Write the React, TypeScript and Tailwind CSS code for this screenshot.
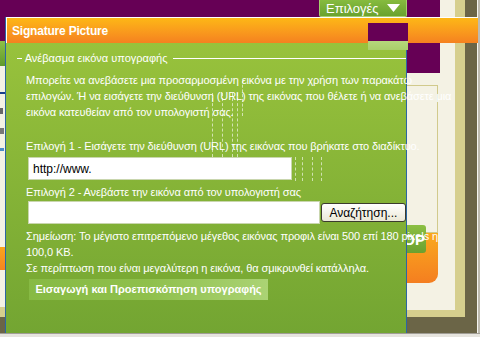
const font = "font-['Liberation_Sans','DejaVu_Sans',Arial,sans-serif]";

function LeftStrip() {
  return (
    <div className="flex w-[6px] flex-col">
      <div className="h-[41px] bg-[#660055]" />
      <div className="h-[25px] bg-gradient-to-b from-[#8fc046] to-[#5f9a2c]" />
      <div className="flex flex-1 flex-col gap-[14px] bg-[#f4f2e4] pt-[26px]">
        <div className="h-[2px] w-[5px] bg-[#1b3f8a]" />
        <div className="h-[6px] w-[3px] bg-[#666]" />
        <div className="h-[6px] w-[4px] bg-[#777]" />
        <div className="h-[3px] w-[4px] bg-[#4a8bc8]" />
      </div>
      <div className="h-[23px] bg-gradient-to-b from-[#f9a51c] to-[#f48420]" />
      <div className="h-[37px] bg-[#f4f2e4]" />
      <div className="h-[10px] bg-[#d6cf8e]" />
      <div className="h-[16px] bg-[#6b6547]" />
    </div>
  );
}

function RightStrip() {
  return (
    <div className="flex w-[73px] flex-col">
      <div className="flex flex-1">
        <div className="flex w-[58px] flex-col">
          <div className="flex flex-1">
            <div className="flex w-[48px] flex-col bg-[#f4f2e4]">
              <div className="h-[73px] w-[33px] bg-[#660055]" />
              <div className="mt-[12px] h-[148px] w-[31px] border border-l-0 border-[#d1ca8c]" />
              <div className="relative h-[50px] w-[31px] rounded-br-[9px] bg-gradient-to-b from-[#f9a91c] to-[#f47e20]">
                <div className="absolute left-0 top-[-8px] flex h-[28px] w-[19px] items-center justify-end overflow-hidden rounded-r-[3px] bg-gradient-to-b from-[#8cc043] to-[#6aa02f]">
                  <span className="whitespace-nowrap pr-[1px] text-[15px] font-bold leading-none text-white">OP</span>
                </div>
              </div>
            </div>
            <div className="w-[10px] bg-[#d6cf8e]" />
          </div>
          <div className="h-[7px] bg-[#d6cf8e]" />
        </div>
        <div className="w-[12px] bg-[#6b6547]" />
        <div className="w-[1px] bg-[#f5f5f0]" />
        <div className="w-[2px] bg-[#bdbab0]" />
      </div>
      <div className="flex h-[16px]">
        <div className="w-[70px] bg-[#6b6547]" />
        <div className="w-[1px] bg-[#f5f5f0]" />
        <div className="w-[2px] bg-[#bdbab0]" />
      </div>
    </div>
  );
}

function Line({ children }: { children: React.ReactNode }) {
  return (
    <div className="h-[16px] whitespace-nowrap text-[11px] leading-[16px] tracking-[-0.1px] text-white">
      {children}
    </div>
  );
}

function Glitch({ x, y, h }: { x: number; y: number; h: number }) {
  return (
    <div
      className="absolute w-0 border-l border-dashed border-white/60"
      style={{ left: x, top: y, height: h }}
    />
  );
}

function Dialog() {
  return (
    <div className="absolute left-[5px] top-[17px] h-[316px] w-[402px] border-l border-r border-[#2b66a3]">
      {/* header */}
      <div className="relative h-[26px] w-[472px] border-t border-l border-white bg-gradient-to-b from-[#fdb716] to-[#f58120] pl-[5px]">
        <span className="text-[12px] font-bold leading-[24px] tracking-[-0.2px] text-white">Signature Picture</span>
        <div className="absolute left-[361px] top-[5px] h-[18px] w-[40px] bg-[#660055]" />
        <div className="absolute left-[361px] top-[23px] h-[9px] w-[40px] bg-gradient-to-b from-[#b6d77c] to-[#a9cf6a]" />
      </div>
      {/* body */}
      <div className="h-[290px] bg-gradient-to-b from-[#98c23c] to-[#73a532] pt-[7px]">
        <div className="flex h-[16px] items-center">
          <div className="ml-[11px] h-px w-[6px] bg-white" />
          <span className="ml-[3px] whitespace-nowrap text-[11px] text-white">Ανέβασμα εικόνα υπογραφής</span>
          <div className="ml-[6px] h-px w-[296px] bg-white" />
        </div>
        <div className="mt-[6px] pl-[20px]">
          <Line>Μπορείτε να ανεβάσετε μια προσαρμοσμένη εικόνα με την χρήση των παρακάτω</Line>
          <Line>επιλογών. Ή να εισάγετε την διεύθυνση (URL) της εικόνας που θέλετε ή να ανεβάσετε μια</Line>
          <Line>εικόνα κατευθείαν από τον υπολογιστή σας.</Line>
          <div className="mt-[18px]">
            <Line>Επιλογή 1 - Εισάγετε την διεύθυνση (URL) της εικόνας που βρήκατε στο διαδίκτυο.</Line>
          </div>
          <input
            readOnly
            value="http://www."
            className="ml-[2px] mt-[3px] block h-[23px] w-[264px] border border-[#c9d6ae] bg-white px-[4px] text-[12px] text-black outline-none"
          />
          <div className="mt-[4px]">
            <Line>Επιλογή 2 - Ανεβάστε την εικόνα από τον υπολογιστή σας</Line>
          </div>
          <div className="ml-[2px] mt-[1px] flex items-center">
            <input
              readOnly
              value=""
              className="block h-[23px] w-[328px] border border-[#c9d6ae] bg-white px-[4px] text-[12px] outline-none"
            />
            <button className="ml-[1px] h-[19px] w-[96px] rounded-[3px] border border-[#3b3b2e] bg-gradient-to-b from-white to-[#ebe8d6] text-[12px] leading-none text-black">
              Αναζήτηση...
            </button>
          </div>
          <div className="mt-[4px]">
            <Line>Σημείωση: Το μέγιστο επιτρεπόμενο μέγεθος εικόνας προφιλ είναι 500 επί 180 pixels η</Line>
            <Line>100,0 KB.</Line>
            <Line>Σε περίπτωση που είναι μεγαλύτερη η εικόνα, θα σμικρυνθεί κατάλληλα.</Line>
          </div>
          <button className="ml-[3px] mt-[3px] flex h-[21px] w-[239px] items-center justify-center whitespace-nowrap bg-gradient-to-r from-[#87ba44] via-[#8fc04c] to-[#abd374] text-[11px] font-bold text-white">
            Εισαγωγή και Προεπισκόπηση υπογραφής
          </button>
        </div>
      </div>
    </div>
  );
}

export default function App() {
  return (
    <div className={`relative h-[337px] w-[480px] overflow-hidden bg-[#660055] ${font}`}>
      <div className="flex h-full flex-col">
        <div className="flex flex-1">
          <LeftStrip />
          <div className="flex-1 bg-[#660055]" />
          <RightStrip />
        </div>
        <div className="h-[4px] border-t border-[#a09d95] bg-[#e6e4de]" />
      </div>

      {/* options button of the page behind */}
      <div className="absolute left-[319px] top-0 flex h-[17px] w-[88px] items-center rounded-b-[2px] border border-t-0 border-[#a7cf6e] bg-gradient-to-b from-[#86bb3f] to-[#6aa22e] pl-[6px]">
        <span className="text-[13px] leading-none text-white">Επιλογές</span>
        <svg width="13" height="8" viewBox="0 0 13 8" className="ml-[8px]">
          <path d="M0 0h13L6.5 8z" fill="#fff" />
        </svg>
      </div>

      <Dialog />

      {/* rendering artefacts */}
      <Glitch x={212} y={93} h={64} />
      <Glitch x={222} y={93} h={64} />
      <Glitch x={232} y={93} h={64} />
      <Glitch x={237} y={93} h={64} />
      <Glitch x={242} y={80} h={36} />
      <Glitch x={295} y={157} h={24} />
      <Glitch x={302} y={157} h={24} />
      <Glitch x={312} y={157} h={24} />
      <Glitch x={321} y={157} h={24} />
    </div>
  );
}
